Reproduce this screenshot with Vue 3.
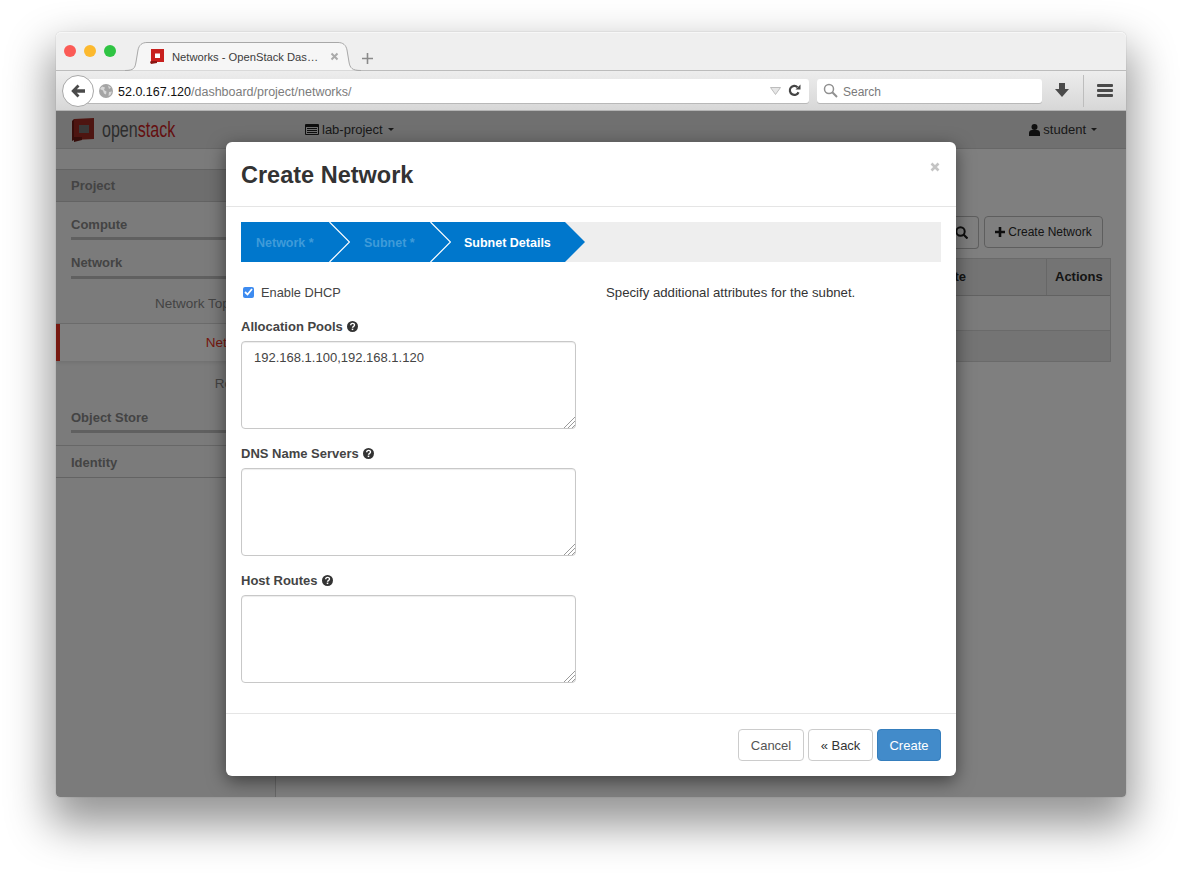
<script setup>
const sideTop = [
  { label: 'Compute', cls: 'sec' },
  { label: 'Network', cls: 'sec net' }
]
const helpLabels = [
  { label: 'Allocation Pools', value: '192.168.1.100,192.168.1.120' },
  { label: 'DNS Name Servers', value: '' },
  { label: 'Host Routes', value: '' }
]
</script>

<template>
  <div class="stage">
    <div class="window">
      <div class="tabstrip">
        <div class="lights"><i class="red"></i><i class="yellow"></i><i class="green"></i></div>
        <div class="tab">
          <svg class="tabshape" width="236" height="29" viewBox="0 0 236 29">
            <path d="M0 28.5C9 28.5 10 26 11 20L13 8C14 3 17 .5 22 .5H213C218 .5 221 3 222 8L224 20C225 26 227 28.5 236 28.5" fill="#f6f6f6" stroke="#a8a8a8"/>
          </svg>
          <svg class="favicon" width="15" height="15" viewBox="0 0 15 15">
            <path d="M1 0h13v13H1z" fill="#c8201e"/><path d="M5 4.500h5v4.500H5z" fill="#fff"/><path d="M0 13l1-1h6v2l-6 1z" fill="#8c1512"/>
          </svg>
          <span class="tabtitle">Networks - OpenStack Das…</span>
          <svg class="tabclose" width="9" height="9" viewBox="0 0 9 9"><path d="M1.500 1.500l6 6M7.500 1.500l-6 6" stroke="#aaa" stroke-width="2"/></svg>
        </div>
        <svg class="plus" width="11" height="11" viewBox="0 0 11 11"><path d="M5.500 0v11M0 5.500h11" stroke="#8a8a8a" stroke-width="1.600"/></svg>
      </div>

      <div class="toolbar">
        <div class="back">
          <svg width="16" height="14" viewBox="0 0 16 14"><path d="M7.500 .5L1.200 7l6.300 6.500 2-2L6.800 8.700H15V5.300H6.800L9.500 2.500z" fill="#4a4a4a"/></svg>
        </div>
        <div class="urlbar">
          <svg class="globe" width="14" height="14" viewBox="0 0 14 14"><circle cx="7" cy="7" r="7" fill="#a5a5a5"/><path d="M3 2.500l3 1-1 2.500 2.500 1.500-.5 3-2-1-1-3L1 5zM9 1.500l3 2-2 1.500zM10 8l3-.5-1.500 3.500-2 1z" fill="#d8d8d8"/></svg>
          <span class="url"><b>52.0.167.120</b>/dashboard/project/networks/</span>
          <svg class="drop" width="11" height="8" viewBox="0 0 11 8"><path d="M.5.5h10L5.500 7.500z" fill="#e6e6e6" stroke="#bdbdbd"/></svg>
          <svg class="reload" width="13" height="13" viewBox="0 0 13 13"><path d="M10.500 8.200A4.500 4.500 0 1 1 9.500 3.200" fill="none" stroke="#444" stroke-width="2.200"/><path d="M7.500 5.600h5v-5z" fill="#444"/></svg>
        </div>
        <div class="searchbar">
          <svg width="15" height="15" viewBox="0 0 15 15"><circle cx="6" cy="6" r="4.500" fill="none" stroke="#909090" stroke-width="1.500"/><path d="M9.300 9.300l4.700 4.700" stroke="#909090" stroke-width="2"/></svg>
          <span>Search</span>
        </div>
        <svg class="download" width="14" height="15" viewBox="0 0 14 15"><path d="M4 0h6v6h4l-7 8-7-8h4z" fill="#4a4a4a"/></svg>
        <span class="tdiv"></span>
        <span class="burger"><i></i><i></i><i></i></span>
      </div>

      <div class="page">
        <header class="topnav">
          <div class="logo">
            <svg width="24" height="24" viewBox="0 0 24 24">
              <path d="M2 1l20-1v21l-20 1z" fill="#9c2a22"/><path d="M7 7h10v8H7z" fill="#727272"/><path d="M0 3l2-2v21l-2 1z" fill="#6c1a14"/><path d="M2 19h8v3l-8 2z" fill="#6c1a14"/>
            </svg>
            <span class="word">open<em>stack</em></span>
          </div>
          <div class="proj">
            <svg width="14" height="11" viewBox="0 0 14 11"><path d="M1 0h12a1 1 0 0 1 1 1v9a1 1 0 0 1-1 1H1a1 1 0 0 1-1-1V1a1 1 0 0 1 1-1zM1 3v7h12V3zM2 4h10v1H2zM2 6h10v1H2zM2 8h10v1H2z" fill="#1e1e1e" fill-rule="evenodd"/></svg>
            <span>lab-project</span><i class="caret"></i>
          </div>
          <div class="user">
            <svg width="11" height="12" viewBox="0 0 11 12"><circle cx="5.500" cy="3" r="3" fill="#1e1e1e"/><path d="M0 12V9c0-2 1.500-3 3-3h5c1.500 0 3 1 3 3v3z" fill="#1e1e1e"/></svg>
            <span>student</span><i class="caret"></i>
          </div>
        </header>

        <div class="body">
          <aside class="side">
            <div class="band">Project</div>
            <div v-for="s in sideTop" :key="s.label" :class="s.cls">{{ s.label }}</div>
            <div class="link first">Network Topology</div>
            <div class="link active">Networks</div>
            <div class="link last">Routers</div>
            <div class="sec store">Object Store</div>
            <div class="band plain">Identity</div>
          </aside>
          <main class="main">
            <div class="actions">
              <span class="searchbtn">
                <svg width="13" height="13" viewBox="0 0 13 13"><circle cx="5.500" cy="5.500" r="4.200" fill="none" stroke="#1c1c1c" stroke-width="2"/><path d="M8.500 8.500l4 4" stroke="#1c1c1c" stroke-width="2.200"/></svg>
              </span>
              <span class="createbtn">
                <svg width="10" height="10" viewBox="0 0 10 10"><path d="M5 0v10M0 5h10" stroke="#1c1c1c" stroke-width="2.600"/></svg>
                Create Network
              </span>
            </div>
            <div class="table">
              <div class="thead"><span class="th-a">Admin State</span><span class="th-b">Actions</span></div>
              <div class="row"></div>
              <div class="row alt"></div>
            </div>
          </main>
        </div>

        <div class="overlay">
          <section class="modal">
            <div class="mhead">
              <h3>Create Network</h3>
              <svg class="mclose" width="10" height="10" viewBox="0 0 10 10"><path d="M1.500 1.500l7 7M8.500 1.500l-7 7" stroke="#c4c4c4" stroke-width="2.600"/></svg>
            </div>
            <div class="mbody">
              <div class="wizard">
                <div class="step s1">Network *
                  <svg class="chev" width="21" height="40" viewBox="0 0 21 40"><path d="M.5 0l20 20-20 20" fill="none" stroke="#fff" stroke-width="1.200"/></svg>
                </div>
                <div class="step s2">Subnet *
                  <svg class="chev" width="21" height="40" viewBox="0 0 21 40"><path d="M.5 0l20 20-20 20" fill="none" stroke="#fff" stroke-width="1.200"/></svg>
                </div>
                <div class="step s3">Subnet Details</div>
              </div>
              <div class="cols">
                <div class="left">
                  <div class="check">
                    <span class="box"><svg width="9" height="8" viewBox="0 0 9 8"><path d="M1 4l2.500 2.500L8 1" fill="none" stroke="#fff" stroke-width="1.800"/></svg></span>
                    <span>Enable DHCP</span>
                  </div>
                  <div v-for="f in helpLabels" :key="f.label" class="field">
                    <label>{{ f.label }}
                      <svg width="11" height="11" viewBox="0 0 11 11"><circle cx="5.500" cy="5.500" r="5.500" fill="#333"/><path d="M3.700 4.200c0-2.400 3.800-2.400 3.800-.1 0 1.500-2 1.400-2 2.700" fill="none" stroke="#fff" stroke-width="1.400"/><path d="M4.700 7.600h1.600v1.500H4.700z" fill="#fff"/></svg>
                    </label>
                    <div class="areawrap">
                      <textarea :value="f.value"></textarea>
                      <svg class="grip" width="13" height="13" viewBox="0 0 13 13"><path d="M1 12L12 1M5 12l7-7M9 12l3-3" stroke="#9a9a9a" stroke-width="1"/></svg>
                    </div>
                  </div>
                </div>
                <p class="help">Specify additional attributes for the subnet.</p>
              </div>
            </div>
            <div class="mfoot">
              <span class="btn cancel">Cancel</span>
              <span class="btn backb">« Back</span>
              <span class="btn primary">Create</span>
            </div>
          </section>
        </div>
      </div>
    </div>
  </div>
</template>

<style>
html, body { margin: 0; background: #fff; }
</style>

<style scoped>
* { box-sizing: border-box; }
.stage {
  width: 1182px; height: 877px; padding: 32px 56px 0; overflow: hidden;
  font-family: "Liberation Sans", Arial, sans-serif; background: #fff;
}
.window {
  width: 1070px; height: 765px; display: flex; flex-direction: column;
  border-radius: 5px 5px 4px 4px;
  box-shadow: 0 22px 44px 6px rgba(0,0,0,.42), 0 0 1px rgba(0,0,0,.4);
}
.tabstrip {
  height: 39px; flex: none; display: flex; align-items: flex-start;
  background: #efefef; border-radius: 5px 5px 0 0;
  border-bottom: 1px solid #bcbcbc; box-shadow: inset 0 1px 0 #f7f7f7;
}
.lights { display: flex; gap: 8px; padding: 13px 0 0 8px; width: 69px; flex: none; }
.lights i { width: 12px; height: 12px; border-radius: 50%; display: block; }
.red { background: #fb5b56; }
.yellow { background: #fcb92e; }
.green { background: #2fc443; }
.tab {
  position: relative; width: 236px; height: 29px; margin-top: 10px; flex: none;
  display: flex; align-items: center; padding: 0 0 0 47px; font-size: 11.200px; color: #3c3c3c;
}
.tabshape { position: absolute; left: 0; top: 0; }
.favicon { position: relative; margin-left: -22px; margin-right: 7px; flex: none; }
.tabtitle { position: relative; width: 148px; white-space: nowrap; overflow: hidden; }
.tabclose { position: relative; margin-left: 10px; }
.plus { margin: 21px 0 0 1px; }

.toolbar {
  height: 40px; flex: none; display: flex; align-items: center; position: relative;
  background: linear-gradient(#ededed, #d7d7d7); border-bottom: 1px solid #b4b4b4;
  padding-left: 6px;
}
.back {
  width: 32px; height: 32px; border-radius: 50%; background: #fff; border: 1px solid #a8a8a8;
  display: flex; align-items: center; justify-content: center; flex: none; position: relative; z-index: 1;
}
.urlbar {
  margin-left: -8px; width: 723px; height: 24px; background: #fff; border-radius: 0 3px 3px 0;
  box-shadow: 0 1px 0 #b8b8b8; display: flex; align-items: center; padding-left: 13px; flex: none;
}
.globe { flex: none; }
.url { margin-left: 5px; padding-top: 2px; font-size: 12.500px; color: #7c7c7c; flex: 1; white-space: nowrap; }
.url b { font-weight: 400; color: #111; }
.drop { margin-right: 7px; }
.reload { margin-right: 8px; }
.searchbar {
  margin-left: 8px; width: 225px; height: 24px; background: #fff; border-radius: 3px;
  box-shadow: 0 1px 0 #b8b8b8; display: flex; align-items: center; gap: 5px; padding-left: 6px;
  font-size: 12px; color: #7a7a7a; flex: none;
}
.searchbar span { padding-top: 2px; }
.download { margin-left: 13px; flex: none; }
.tdiv { width: 1px; height: 32px; background: #bdbdbd; margin-left: 14px; flex: none; }
.burger { display: flex; flex-direction: column; gap: 2px; margin-left: 13px; width: 16px; flex: none; }
.burger i { display: block; height: 3px; background: #4a4a4a; border-radius: 1px; }

.page { position: relative; flex: 1; display: flex; flex-direction: column; background: #fff; border-radius: 0 0 4px 4px; overflow: hidden; }
.topnav {
  height: 38px; flex: none; background: #e0e0e0; border-bottom: 1px solid #cfcfcf;
  display: flex; align-items: center; font-size: 13px; color: #333; position: relative;
}
.logo { display: flex; align-items: center; width: 247px; padding-left: 16px; flex: none; }
.logo svg { flex: none; }
.word { font-family: "Liberation Sans", sans-serif; font-size: 22px; color: #5b5b5b; margin-left: 6px; transform: scaleX(.73); transform-origin: left center; white-space: nowrap; }
.word em { font-style: normal; color: #c8201e; }
.proj { display: flex; align-items: center; gap: 3px; flex: 1; margin-left: 2px; }
.user { display: flex; align-items: center; gap: 3px; margin-right: 29px; }
.caret { display: inline-block; width: 0; height: 0; border: 3.500px solid transparent; border-top-color: #333; border-bottom: 0; margin-left: 2px; }

.body { flex: 1; display: flex; min-height: 0; }
.side { width: 220px; flex: none; border-right: 1px solid #d0d0d0; padding-top: 20px; font-size: 13px; color: #888; background: #f6f6f6; }
.band { height: 33px; line-height: 31px; padding-left: 15px; font-weight: 700; color: #888; background: #dcdcdc; border-top: 1px solid #c6c6c6; border-bottom: 1px solid #c6c6c6; }
.band.plain { background: transparent; border-top: 0; height: 32px; line-height: 33px; }
.sec { height: 38px; padding: 15px 0 0 15px; font-weight: 700; line-height: 15px; position: relative; color: #888; }
.sec.net { height: 39px; }
.sec::after { content: ""; position: absolute; left: 15px; right: 0; bottom: 0; height: 3px; background: #c0c0c0; }
.sec.store { height: 42px; padding-top: 6px; border-bottom: 1px solid #cfcfcf; }
.sec.store::after { bottom: 12px; }
.link { text-align: right; padding-right: 13px; color: #888; line-height: 15px; font-size: 13.500px; }
.link.first { height: 45px; padding-top: 17px; border-bottom: 1px solid #d8d8d8; }
.link.active { height: 37px; line-height: 37px; color: #ee3322; border-left: 4px solid #ee3322; background: #fff; box-shadow: 0 2px 3px rgba(0,0,0,.08); position: relative; }
.link.last { height: 43px; padding-top: 15px; }

.main { flex: 1; padding: 67px 15px 0 20px; min-width: 0; }
.actions { display: flex; justify-content: flex-end; gap: 5px; padding-right: 8px; }
.searchbtn { width: 40px; height: 33px; border: 1px solid #bdbdbd; border-left: 0; border-radius: 0 4px 4px 0; display: flex; align-items: center; padding-left: 16px; }
.createbtn { width: 119px; height: 32px; border: 1px solid #bdbdbd; border-radius: 4px; font-size: 12px; color: #2a2a2a; display: flex; align-items: center; justify-content: center; gap: 3px; white-space: nowrap; }
.table { margin-top: 9px; border: 1px solid #d4d4d4; font-size: 13px; }
.thead { height: 37px; display: flex; background: #e8e8e8; border-bottom: 1px solid #c4c4c4; font-weight: 700; color: #2a2a2a; align-items: stretch; }
.th-a { flex: 1; text-align: right; padding-right: 80px; line-height: 35px; }
.th-b { width: 64px; border-left: 1px solid #cfcfcf; line-height: 35px; padding-left: 8px; }
.row { height: 35px; border-bottom: 1px solid #d4d4d4; background: #f7f7f7; }
.row.alt { height: 30px; background: #e8e8e8; border-bottom: 0; }

.overlay { position: absolute; inset: 0; background: rgba(0,0,0,.5); }
.modal {
  position: absolute; left: 170px; top: 31px; width: 730px; height: 634px;
  background: #fff; border-radius: 6px; box-shadow: 0 5px 18px rgba(0,0,0,.5);
  display: flex; flex-direction: column; color: #333; font-size: 13px;
}
.mhead { height: 65px; flex: none; border-bottom: 1px solid #e5e5e5; padding: 18px 15px 0; position: relative; }
.mhead h3 { margin: 0; font-size: 23.500px; line-height: 30px; font-weight: 700; color: #333; }
.mclose { position: absolute; right: 16px; top: 20px; }
.mbody { flex: 1; padding: 15px 15px 0; min-height: 0; }
.wizard { height: 40px; background: #eee; display: flex; }
.step { position: relative; height: 40px; background: #0077cc; line-height: 42px; font-size: 12.500px; font-weight: 700; color: #3f9bd9; white-space: nowrap; flex: none; }
.s1 { width: 103px; padding-left: 15px; }
.s2 { width: 100px; padding-left: 20px; }
.s3 { width: 141px; padding-left: 20px; color: #fff; clip-path: polygon(0 0, 121px 0, 141px 20px, 121px 40px, 0 40px); }
.chev { position: absolute; top: 0; right: -7px; z-index: 1; }
.s1 .chev { right: -6px; }
.s2 .chev { right: -7px; }
.cols { display: flex; gap: 30px; padding-top: 23px; }
.left { width: 335px; flex: none; }
.check { display: flex; align-items: center; height: 14px; padding-left: 2px; gap: 7px; color: #444; font-size: 12.800px; }
.box { width: 11px; height: 11px; border-radius: 2px; background: #3d8bf0; display: flex; align-items: center; justify-content: center; flex: none; }
.field label { display: flex; align-items: center; gap: 4px; font-weight: 700; color: #444; height: 15px; }
.field { padding-top: 20px; height: 127px; }
.field:first-of-type { height: 121px; padding-top: 20px; }
.areawrap { position: relative; margin-top: 7px; width: 335px; height: 88px; }
.field textarea {
  display: block; width: 335px; height: 88px; padding: 8px 12px; resize: none;
  border: 1px solid #c8c8c8; border-radius: 4px; font: 13px "Liberation Sans", Arial, sans-serif; color: #444;
  box-shadow: inset 0 1px 1px rgba(0,0,0,.075); outline: none; background: #fff;
}
.grip { position: absolute; right: 0; bottom: 0; }
.help { margin: 0; padding-top: 1px; line-height: 14px; color: #333; font-size: 13.200px; }
.mfoot { height: 63px; flex: none; border-top: 1px solid #e5e5e5; display: flex; justify-content: flex-end; gap: 4px; padding: 15px 15px 0; }
.btn { height: 32px; border: 1px solid #ccc; border-radius: 4px; display: flex; align-items: center; justify-content: center; font-size: 13px; white-space: nowrap; }
.cancel { width: 66px; color: #555; }
.backb { width: 65px; color: #333; }
.primary { width: 64px; background: #428bca; border-color: #357ebd; color: #fff; }
</style>
